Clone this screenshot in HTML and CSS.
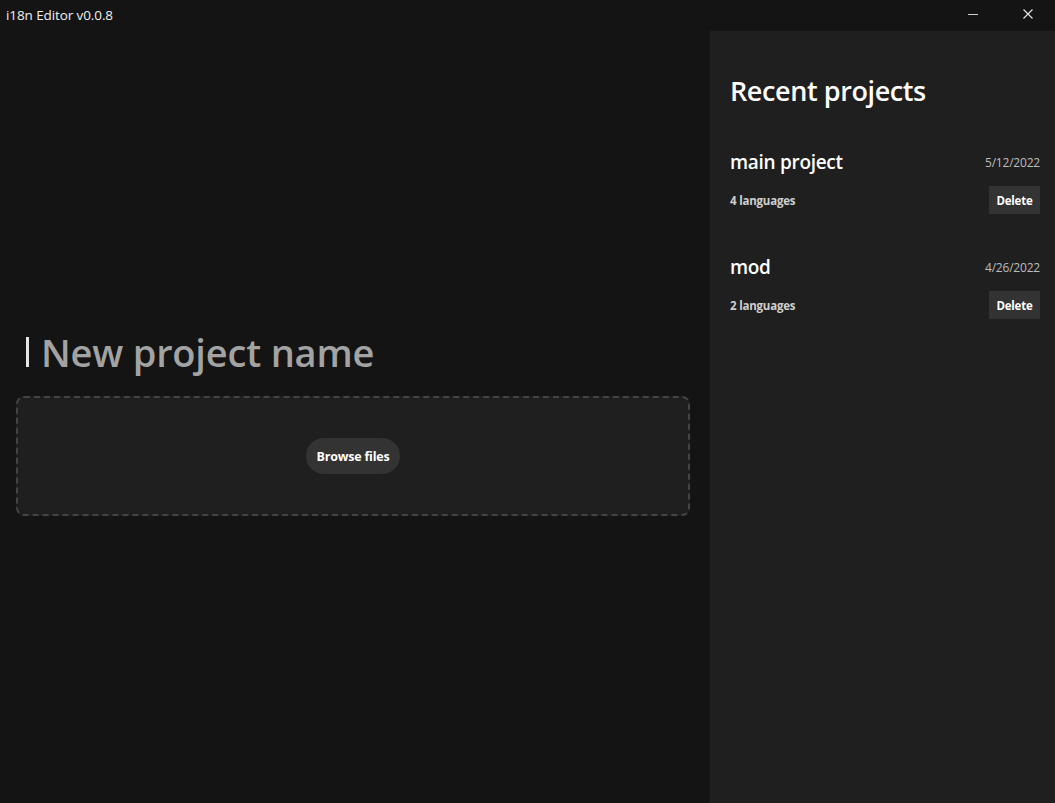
FILE: index.html
```html
<!DOCTYPE html>
<html>
<head>
<meta charset="utf-8">
<link rel="stylesheet" href="styles.css">
</head>
<body>
<div class="app">
  <header class="titlebar">
    <span class="app-title">i18n Editor v0.0.8</span>
    <div class="win-controls">
      <button class="win-btn" aria-label="Minimize">
        <svg width="10" height="10" viewBox="0 0 10 10"><path d="M0 5.5h10" stroke="#cfcfcf" stroke-width="1"/></svg>
      </button>
      <button class="win-btn" aria-label="Close">
        <svg width="10" height="10" viewBox="0 0 10 10"><path d="M0.5 0.5l9 9M9.5 0.5l-9 9" stroke="#e8e8e8" stroke-width="1.1"/></svg>
      </button>
    </div>
  </header>
  <div class="body">
    <main class="main">
      <div class="name-row">
        <span class="caret"></span>
        <span class="name-placeholder">New project name</span>
      </div>
      <div class="dropzone">
        <button class="browse">Browse files</button>
      </div>
    </main>
    <aside class="sidebar">
      <h1 class="sidebar-title">Recent projects</h1>
      <div class="project">
        <div class="project-row">
          <span class="project-name">main project</span>
          <span class="project-date">5/12/2022</span>
        </div>
        <div class="project-row">
          <span class="project-langs">4 languages</span>
          <button class="delete">Delete</button>
        </div>
      </div>
      <div class="project">
        <div class="project-row">
          <span class="project-name">mod</span>
          <span class="project-date">4/26/2022</span>
        </div>
        <div class="project-row">
          <span class="project-langs">2 languages</span>
          <button class="delete">Delete</button>
        </div>
      </div>
    </aside>
  </div>
</div>
</body>
</html>
```
FILE: styles.css
```css
* { box-sizing: border-box; }
html, body { margin: 0; padding: 0; }
body {
  background: #141414;
  color: #fff;
  font-family: "Open Sans", "Noto Sans", "Liberation Sans", sans-serif;
  width: 1055px;
  height: 803px;
  overflow: hidden;
}
.app { display: flex; flex-direction: column; height: 803px; }
.titlebar {
  height: 31px;
  display: flex;
  align-items: center;
  justify-content: space-between;
  background: #141414;
  flex-shrink: 0;
}
.app-title {
  font-size: 13.5px;
  color: #f0f0f0;
  padding-left: 6px;
  padding-bottom: 2px;
  letter-spacing: -0.1px;
}
.win-controls { display: flex; height: 100%; }
.win-btn {
  width: 55px;
  height: 31px;
  background: transparent;
  border: 0;
  padding: 0;
  display: flex;
  align-items: center;
  justify-content: center;
  padding-bottom: 3px;
}
.body { flex: 1; display: flex; min-height: 0; }
.main {
  flex: 1;
  display: flex;
  flex-direction: column;
  justify-content: center;
  padding: 12px 20px 0 16px;
}
.name-row {
  display: flex;
  align-items: center;
  padding-left: 10px;
  height: 44px;
  margin-bottom: 22px;
}
.caret {
  width: 3px;
  height: 30px;
  background: #e6e6e6;
  margin-right: 12px;
}
.name-placeholder {
  font-size: 38px;
  font-weight: 600;
  color: #a3a3a3;
  letter-spacing: -0.2px;
}
.dropzone {
  height: 120px;
  border: 2px dashed #444;
  border-radius: 8px;
  background: #1f1f1f;
  display: flex;
  align-items: center;
  justify-content: center;
}
.browse {
  height: 36px;
  padding: 0 10px;
  border-radius: 18px;
  border: 0;
  background: #333;
  color: #fff;
  font-family: inherit;
  font-size: 12.5px;
  font-weight: 700;
  letter-spacing: -0.2px;
}
.sidebar {
  width: 345px;
  background: #1f1f1f;
  padding: 38px 15px 0 20px;
  flex-shrink: 0;
}
.sidebar-title {
  margin: 0 0 35px 0;
  font-size: 27px;
  font-weight: 600;
  line-height: 44px;
  letter-spacing: -0.4px;
}
.project { margin-bottom: 39px; }
.project-row {
  display: flex;
  align-items: center;
  justify-content: space-between;
}
.project-row + .project-row { margin-top: 10px; }
.project-name {
  font-size: 19px;
  font-weight: 600;
  line-height: 28px;
  letter-spacing: -0.3px;
}
.project-date {
  font-size: 12px;
  color: #bdbdbd;
  letter-spacing: -0.2px;
}
.project-langs {
  font-size: 11.5px;
  font-weight: 700;
  color: #cfcfcf;
  letter-spacing: -0.2px;
}
.delete {
  height: 28px;
  width: 51px;
  border: 0;
  background: #333;
  color: #fff;
  font-family: inherit;
  font-size: 11.5px;
  font-weight: 700;
  letter-spacing: -0.2px;
  padding: 0;
}
```
